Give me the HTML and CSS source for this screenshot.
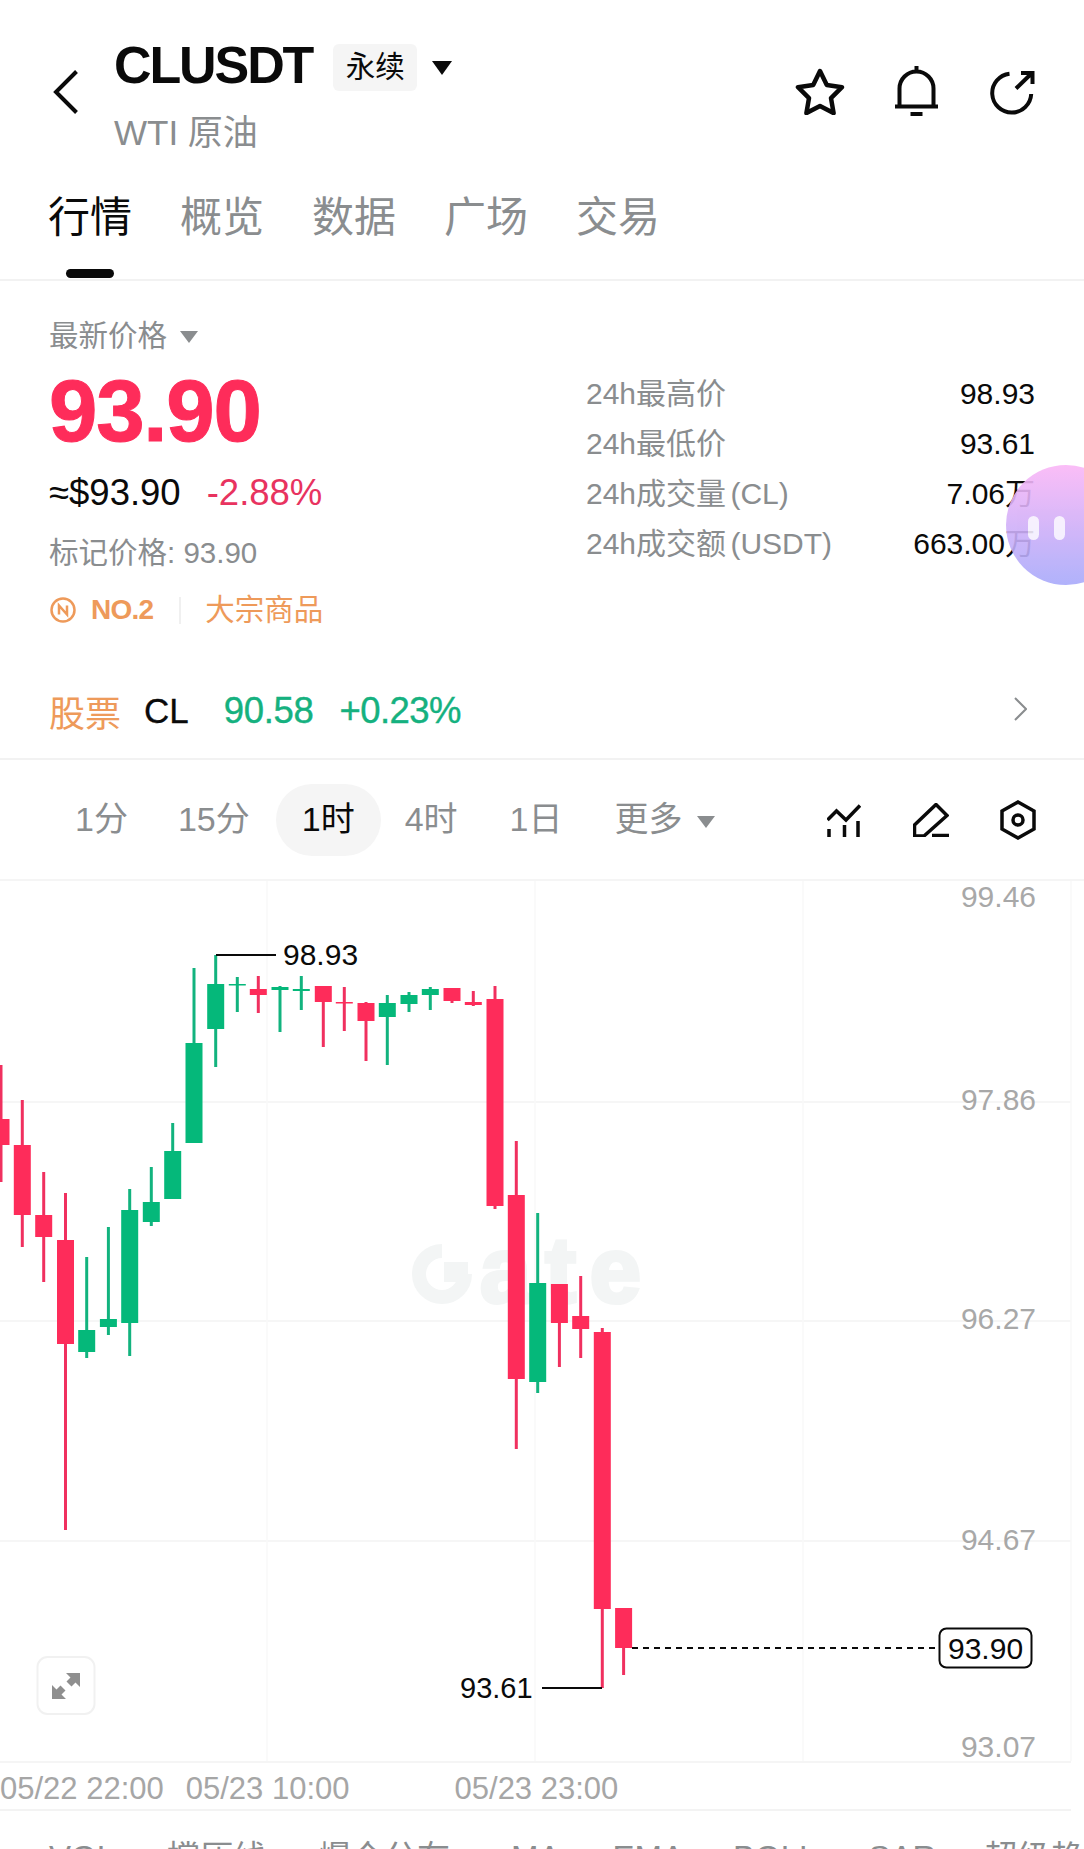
FILE: index.html
```html
<!DOCTYPE html>
<html lang="zh-CN">
<head>
    <meta charset="UTF-8">
    <meta name="viewport" content="width=device-width, initial-scale=1.0">
    <title>CLUSDT 永续</title>
    <link rel="stylesheet" href="styles.css">
</head>
<body>
<div class="page">

    <!-- Cabecalho -->
    <header class="header">
        <svg class="back" viewBox="0 0 25 44"><path d="M23.5 1.5 3 22l20.5 20.5"/></svg>
        <div class="title-block">
            <div class="title-row">
                <span class="symbol">CLUSDT</span>
                <span class="badge">永续</span>
                <span class="caret"></span>
            </div>
            <div class="subtitle">WTI 原油</div>
        </div>
        <div class="actions">
            <svg class="icon-star" viewBox="0 0 50 47"><path d="M25 3l6.8 14 15.2 2.2-11 10.9 2.6 15-13.6-7.2-13.6 7.2 2.6-15-11-10.9L18.200 17z"/></svg>
            <svg class="icon-bell" viewBox="0 0 43 50"><path d="M4.500 40V22.500a17 17 0 0 1 34 0V40M0 40.500h43M21.500 0v5"/><path class="solid" d="M15.500 46h12v4h-12z"/></svg>
            <svg class="icon-share" viewBox="0 0 45 45"><path d="M19.500 3.700A19.500 19.500 0 1 0 41.200 24M26 18.500 42 3M31 3h11.500v11"/></svg>
        </div>
    </header>

    <nav class="tabs">
        <div class="tab active">行情<span class="tab-mark"></span></div>
        <div class="tab">概览</div>
        <div class="tab">数据</div>
        <div class="tab">广场</div>
        <div class="tab">交易</div>
    </nav>

    <!-- Precos -->
    <section class="stats">
        <div class="stats-left">
            <div class="price-label">最新价格 <span class="caret small"></span></div>
            <div class="price">93.90</div>
            <div class="price-sub"><span>≈$93.90</span><span class="change">-2.88%</span></div>
            <div class="mark-price">标记价格: 93.90</div>
            <div class="rank">
                <svg class="rank-icon" viewBox="0 0 26 26"><rect x="1.500" y="1.500" width="23" height="23" rx="11.500"/><path d="M9 17.500v-9l8 9v-9"/></svg>
                <span class="rank-no">NO.2</span>
                <span class="rank-sep"></span>
                <span>大宗商品</span>
            </div>
        </div>
        <div class="stats-right">
            <div class="stat"><span>24h最高价</span><b>98.93</b></div>
            <div class="stat"><span>24h最低价</span><b>93.61</b></div>
            <div class="stat"><span>24h成交量 (CL)</span><b>7.06万</b></div>
            <div class="stat"><span>24h成交额 (USDT)</span><b>663.00万</b></div>
        </div>
    </section>

    <section class="stock">
        <span class="stock-tag">股票</span>
        <span class="stock-name">CL</span>
        <span class="stock-val">90.58</span>
        <span class="stock-val stock-pct">+0.23%</span>
        <svg class="stock-arrow" viewBox="0 0 13 24"><path d="M1 1l11 11L1 23"/></svg>
    </section>

    <!-- Intervalos -->
    <section class="toolbar">
        <span class="interval">1分</span>
        <span class="interval">15分</span>
        <span class="interval active">1时</span>
        <span class="interval">4时</span>
        <span class="interval">1日</span>
        <span class="interval more">更多 <span class="caret small"></span></span>
        <div class="tools">
            <svg class="tool-chart" viewBox="0 0 34 34"><path d="M0.500 17 9.500 8l9.500 9L33 2.500M2 26v8M17.500 22v12M31 18v16"/></svg>
            <svg class="tool-pen" viewBox="0 0 36 34"><path d="M23 1.500 34 12.500 11 33H1.500V22zM19 32.500h17"/></svg>
            <svg class="tool-hex" viewBox="0 0 36 40"><path d="M18 2 34 11v18L18 38 2 29V11z"/><circle cx="18" cy="20" r="5"/></svg>
        </div>
    </section>

    <!-- Grafico -->
    <svg class="chart" viewBox="0 881 1084 880">
        <g class="grid">
            <path d="M0 1102h1071M0 1321h1071M0 1541h1071"/>
            <path class="grid-v" d="M267 881v880M535 881v880M803 881v880M1071 881v880"/>
        </g>

        <g class="watermark">
            <path class="watermark-ring" d="M442 1251a23 23 0 1 0 23 23"/>
            <path class="watermark-dot" d="M444 1262h24v20h-24z"/>
            <text x="480" y="1302">ate</text>
        </g>

        <g class="down">
            <line x1="1" y1="1065" x2="1" y2="1182"/><rect x="-7.500" y="1119" width="17" height="26"/>
            <line x1="22.300" y1="1100" x2="22.300" y2="1247"/><rect x="13.800" y="1145" width="17" height="70"/>
            <line x1="43.700" y1="1172" x2="43.700" y2="1282"/><rect x="35.200" y="1215" width="17" height="22"/>
            <line x1="65.500" y1="1193" x2="65.500" y2="1530"/><rect x="57" y="1240" width="17" height="104"/>
            <line x1="258.300" y1="976" x2="258.300" y2="1013"/><rect x="249.800" y="989" width="17" height="6"/>
            <line x1="323.300" y1="986" x2="323.300" y2="1047"/><rect x="314.800" y="986" width="17" height="16"/>
            <line x1="344.300" y1="987" x2="344.300" y2="1031"/><rect x="335.800" y="1002" width="17" height="1.500"/>
            <line x1="366" y1="1002" x2="366" y2="1061"/><rect x="357.500" y="1003" width="17" height="18"/>
            <line x1="452" y1="988" x2="452" y2="1003"/><rect x="443.500" y="988" width="17" height="13"/>
            <line x1="473.300" y1="991" x2="473.300" y2="1006"/><rect x="464.800" y="1002" width="17" height="3"/>
            <line x1="495" y1="986" x2="495" y2="1209"/><rect x="486.500" y="999" width="17" height="207"/>
            <line x1="516.300" y1="1141" x2="516.300" y2="1449"/><rect x="507.800" y="1195" width="17" height="184"/>
            <line x1="559.400" y1="1284" x2="559.400" y2="1367"/><rect x="550.900" y="1284" width="17" height="39"/>
            <line x1="580.700" y1="1276" x2="580.700" y2="1358"/><rect x="572.200" y="1316" width="17" height="13"/>
            <line x1="602.300" y1="1328" x2="602.300" y2="1688"/><rect x="593.800" y="1332" width="17" height="277"/>
            <line x1="623.600" y1="1608" x2="623.600" y2="1675"/><rect x="615.100" y="1608" width="17" height="40"/>
        </g>

        <g class="up">
            <line x1="86.700" y1="1257" x2="86.700" y2="1358"/><rect x="78.200" y="1330" width="17" height="22"/>
            <line x1="108.400" y1="1227" x2="108.400" y2="1335"/><rect x="99.900" y="1319" width="17" height="8"/>
            <line x1="129.700" y1="1189" x2="129.700" y2="1356"/><rect x="121.200" y="1210" width="17" height="113"/>
            <line x1="151.300" y1="1167" x2="151.300" y2="1226"/><rect x="142.800" y="1202" width="17" height="20"/>
            <line x1="172.700" y1="1123" x2="172.700" y2="1199"/><rect x="164.200" y="1151" width="17" height="48"/>
            <line x1="194" y1="968" x2="194" y2="1143"/><rect x="185.500" y="1043" width="17" height="100"/>
            <line x1="215.700" y1="955" x2="215.700" y2="1067"/><rect x="207.200" y="984" width="17" height="45"/>
            <line x1="237.300" y1="977" x2="237.300" y2="1012"/><rect x="228.800" y="984" width="17" height="1.500"/>
            <line x1="280" y1="986" x2="280" y2="1032"/><rect x="271.500" y="987" width="17" height="3"/>
            <line x1="301.300" y1="976" x2="301.300" y2="1010"/><rect x="292.800" y="989" width="17" height="2"/>
            <line x1="387.300" y1="995" x2="387.300" y2="1065"/><rect x="378.800" y="1003" width="17" height="14"/>
            <line x1="409" y1="992" x2="409" y2="1012"/><rect x="400.500" y="995" width="17" height="9"/>
            <line x1="430.300" y1="987" x2="430.300" y2="1010"/><rect x="421.800" y="989" width="17" height="6"/>
            <line x1="537.700" y1="1213" x2="537.700" y2="1393"/><rect x="529.200" y="1283" width="17" height="99"/>
        </g>

        <g class="axis">
            <text x="1036" y="907">99.46</text>
            <text x="1036" y="1110">97.86</text>
            <text x="1036" y="1329">96.27</text>
            <text x="1036" y="1550">94.67</text>
            <text x="1036" y="1757">93.07</text>
        </g>

        <g class="marks">
            <path d="M216 955h60M542 1688h60"/>
            <path class="last-line" d="M632 1648h307"/>
            <rect class="last-box" x="939.500" y="1628.500" width="92" height="39" rx="7"/>
            <text x="283" y="965">98.93</text>
            <text class="low-mark" x="460" y="1698">93.61</text>
            <text x="948" y="1658.500">93.90</text>
        </g>

        <rect class="expand" x="37.500" y="1657" width="57" height="57" rx="10"/>
        <path class="expand-icon" d="M66 1673h14v14l-4.500-4.500-4 4-5-5 4-4zM66 1699H52v-14l4.500 4.500 4-4 5 5-4 4z"/>
    </svg>

    <div class="times">
        <span>05/22 22:00</span>
        <span>05/23 10:00</span>
        <span class="time-last">05/23 23:00</span>
    </div>

    <div class="indicators">
        <span>VOL</span>
        <span>撑压线</span>
        <span>爆仓分布</span>
        <span>MA</span>
        <span>EMA</span>
        <span>BOLL</span>
        <span>SAR</span>
        <span>超级趋势</span>
    </div>

    <!-- Bolha flutuante -->
    <div class="bubble"><span></span><span></span></div>
</div>
</body>
</html>
```

FILE: styles.css
```css
/* Estilos Gerais */
* {
    box-sizing: border-box;
}

body {
    margin: 0;
    background-color: #fff;
    color: #0a0a0a;
    font-family: "Liberation Sans", "Noto Sans CJK SC", sans-serif;
}

.page {
    position: relative;
    width: 1084px;
    height: 1849px;
    overflow: hidden;
}

svg {
    display: block;
    fill: none;
    stroke: #0a0a0a;
}

.caret {
    display: inline-block;
    width: 0;
    height: 0;
    border-left: 10px solid transparent;
    border-right: 10px solid transparent;
    border-top: 14px solid #0a0a0a;
}

.caret.small {
    border-left-width: 9px;
    border-right-width: 9px;
    border-top: 12px solid #8a8d8f;
    vertical-align: 3px;
    margin-left: 5px;
}

/* Cabecalho */
.header {
    display: flex;
    height: 160px;
    padding: 0 49px 0 53px;
}

.back {
    width: 25px;
    height: 44px;
    margin-top: 70px;
    stroke-width: 4;
}

.title-block {
    margin-left: 36px;
    padding-top: 35px;
}

.title-row {
    display: flex;
    align-items: center;
    height: 60px;
}

.symbol {
    font-size: 52px;
    font-weight: bold;
    letter-spacing: -2.100px;
}

.badge {
    margin-left: 21px;
    width: 84px;
    height: 47px;
    margin-top: 5px;
    border-radius: 6px;
    background-color: #f5f5f5;
    font-size: 29.500px;
    line-height: 46px;
    text-align: center;
}

.title-row .caret {
    margin-left: 15px;
    margin-top: 5px;
}

.subtitle {
    margin-top: 18px;
    font-size: 35px;
    line-height: 40px;
    color: #8a8d8f;
}

.actions {
    display: flex;
    margin-left: auto;
    padding-top: 66px;
}

.actions svg {
    stroke-width: 4;
}

.icon-star {
    width: 50px;
    height: 47px;
    margin-top: 2px;
    stroke-linejoin: round;
    stroke-width: 4.500 !important;
}

.icon-bell {
    width: 43px;
    height: 50px;
    margin-left: 50px;
}

.icon-bell .solid {
    fill: #0a0a0a;
    stroke: none;
}

.icon-share {
    width: 45px;
    height: 45px;
    margin-left: 52px;
    margin-top: 4px;
}

/* Abas */
.tabs {
    display: flex;
    gap: 48px;
    height: 121px;
    padding: 30px 0 0 48px;
    border-bottom: 2px solid #f2f2f2;
}

.tab {
    display: flex;
    flex-direction: column;
    align-items: center;
    height: 89px;
    font-size: 42px;
    line-height: 56px;
    color: #8a8d8f;
}

.tab.active {
    color: #0a0a0a;
}

.tab-mark {
    width: 48px;
    height: 9px;
    margin-top: 23px;
    border-radius: 5px;
    background-color: #0a0a0a;
}

/* Precos */
.stats {
    display: flex;
    height: 379px;
    padding-top: 35px;
}

.stats-left {
    width: 586px;
    padding-left: 49px;
}

.price-label {
    font-size: 29.500px;
    line-height: 40px;
    color: #8a8d8f;
}

.price {
    margin-top: 10px;
    font-size: 87px;
    font-weight: bold;
    line-height: 90px;
    letter-spacing: -1.200px;
    -webkit-text-stroke: 1px #fe2c5a;
    color: #fe2c5a;
}

.price-sub {
    display: flex;
    gap: 26px;
    margin-top: 15px;
    font-size: 36.500px;
    line-height: 44px;
}

.change {
    color: #e8335f;
}

.mark-price {
    margin-top: 18px;
    font-size: 29.500px;
    line-height: 40px;
    color: #8a8d8f;
}

.rank {
    display: flex;
    align-items: center;
    margin-top: 17px;
    margin-left: 1px;
    font-size: 29.500px;
    line-height: 40px;
    color: #ee9a5a;
}

.rank-icon {
    width: 26px;
    height: 26px;
    stroke: #ee9a5a;
    stroke-width: 2.500;
}

.rank-no {
    margin-left: 15px;
    font-size: 28px;
    font-weight: bold;
    letter-spacing: -0.800px;
}

.rank-sep {
    width: 2px;
    height: 27px;
    margin: 0 24px 0 26px;
    background-color: #f0f0f0;
}

.stats-right {
    flex: 1;
    padding: 53px 49px 0 0;
}

.stat {
    display: flex;
    justify-content: space-between;
    height: 50px;
    font-size: 30px;
    line-height: 50px;
    word-spacing: -4px;
    color: #8a8d8f;
}

.stat b {
    font-weight: normal;
    color: #0a0a0a;
}

/* Linha da acao */
.stock {
    display: flex;
    align-items: center;
    height: 100px;
    padding: 4px 57px 0 49px;
    border-bottom: 2px solid #f2f2f2;
    font-size: 35px;
}

.stock-tag {
    font-size: 36px;
    color: #ee9a5a;
}

.stock-name {
    margin-left: 23px;
    -webkit-text-stroke: 0.300px #0a0a0a;
}

.stock-val {
    margin-left: 35px;
    font-size: 36.500px;
    letter-spacing: -0.300px;
    -webkit-text-stroke: 0.400px #15b17f;
    color: #15b17f;
}

.stock-pct {
    margin-left: 26px;
    letter-spacing: -0.600px;
}

.stock-arrow {
    width: 13px;
    height: 24px;
    margin-left: auto;
    margin-top: -4px;
    stroke: #8a8d8f;
    stroke-width: 2;
}

/* Intervalos */
.toolbar {
    display: flex;
    align-items: center;
    height: 121px;
    padding: 0 48px 0 49px;
    border-bottom: 2px solid #f5f5f5;
    font-size: 34px;
    color: #8a8d8f;
}

.interval {
    height: 72px;
    padding: 0 26px;
    border-radius: 36px;
    line-height: 71px;
    white-space: nowrap;
}

.interval:nth-child(2) {
    margin-left: -2px;
}

.interval.active {
    margin-left: 0;
    margin-right: -2px;
    background-color: #f5f5f5;
    color: #0a0a0a;
}

.tools {
    display: flex;
    align-items: center;
    margin-left: auto;
}

.tools svg {
    stroke-width: 3.500;
}

.tool-chart {
    width: 34px;
    height: 34px;
}

.tool-pen {
    width: 36px;
    height: 34px;
    margin-left: 52px;
}

.tool-hex {
    width: 36px;
    height: 40px;
    margin-left: 51px;
}

/* Grafico */
.chart {
    width: 1084px;
    height: 880px;
    stroke: none;
    overflow: visible;
    font-size: 30px;
}

.grid path {
    stroke: #f4f4f4;
    stroke-width: 1.500;
}

.grid .grid-v {
    stroke: #f9f9f9;
}

.watermark {
    fill: #f3f5f5;
    font-size: 92px;
    font-weight: bold;
    letter-spacing: 14px;
}

.watermark text {
    stroke: #f3f5f5;
    stroke-width: 4;
}

.watermark-ring {
    fill: none;
    stroke: #f3f5f5;
    stroke-width: 14;
}

.down rect {
    fill: #fe2c5a;
}

.down line {
    stroke: #f0305f;
    stroke-width: 3;
}

.up rect {
    fill: #05b87a;
}

.up line {
    stroke: #12b37e;
    stroke-width: 3;
}

.axis text {
    fill: #a8a8a8;
    text-anchor: end;
}

.marks path {
    stroke: #0a0a0a;
    stroke-width: 2;
}

.marks .last-line {
    stroke-dasharray: 6 5;
}

.last-box {
    fill: #fff;
    stroke: #0a0a0a;
    stroke-width: 2;
}

.marks text {
    fill: #0a0a0a;
    font-size: 30px;
}

.marks .low-mark {
    font-size: 29px;
}

.expand {
    fill: #fff;
    stroke: #f1f1f1;
    stroke-width: 2;
}

.expand-icon {
    fill: #8f8f8f;
}

/* Eixo do tempo */
.times {
    display: flex;
    height: 50px;
    border-top: 2px solid #f5f5f5;
    border-bottom: 2px solid #f3f3f3;
    width: 1071px;
    font-size: 31px;
    line-height: 52px;
    white-space: nowrap;
    color: #a6a6a6;
}

.times span {
    margin-left: 22px;
}

.times span:first-child {
    margin-left: 0;
}

.times .time-last {
    margin-left: 105px;
}

/* Indicadores */
.indicators {
    display: flex;
    gap: 52px;
    padding: 27px 0 0 49px;
    font-size: 33px;
    line-height: 40px;
    white-space: nowrap;
    color: #8a8d8f;
}

.indicators span:nth-child(4) {
    margin-left: 9px;
}

.indicators span:nth-child(6) {
    margin-left: -3px;
}

.indicators span:nth-child(7) {
    margin-left: -1px;
}

.indicators span:nth-child(8) {
    margin-left: -4px;
}

/* Bolha flutuante */
.bubble {
    position: absolute;
    top: 465px;
    left: 1006px;
    display: flex;
    gap: 15px;
    align-items: center;
    width: 120px;
    height: 120px;
    padding-left: 22px;
    border-radius: 50%;
    background: linear-gradient(#fab6f6, #a8aafb);
    opacity: 0.9;
}

.bubble span {
    width: 11px;
    height: 24px;
    margin-top: 6px;
    border-radius: 6px;
    background-color: rgba(255, 255, 255, 0.8);
}
```
